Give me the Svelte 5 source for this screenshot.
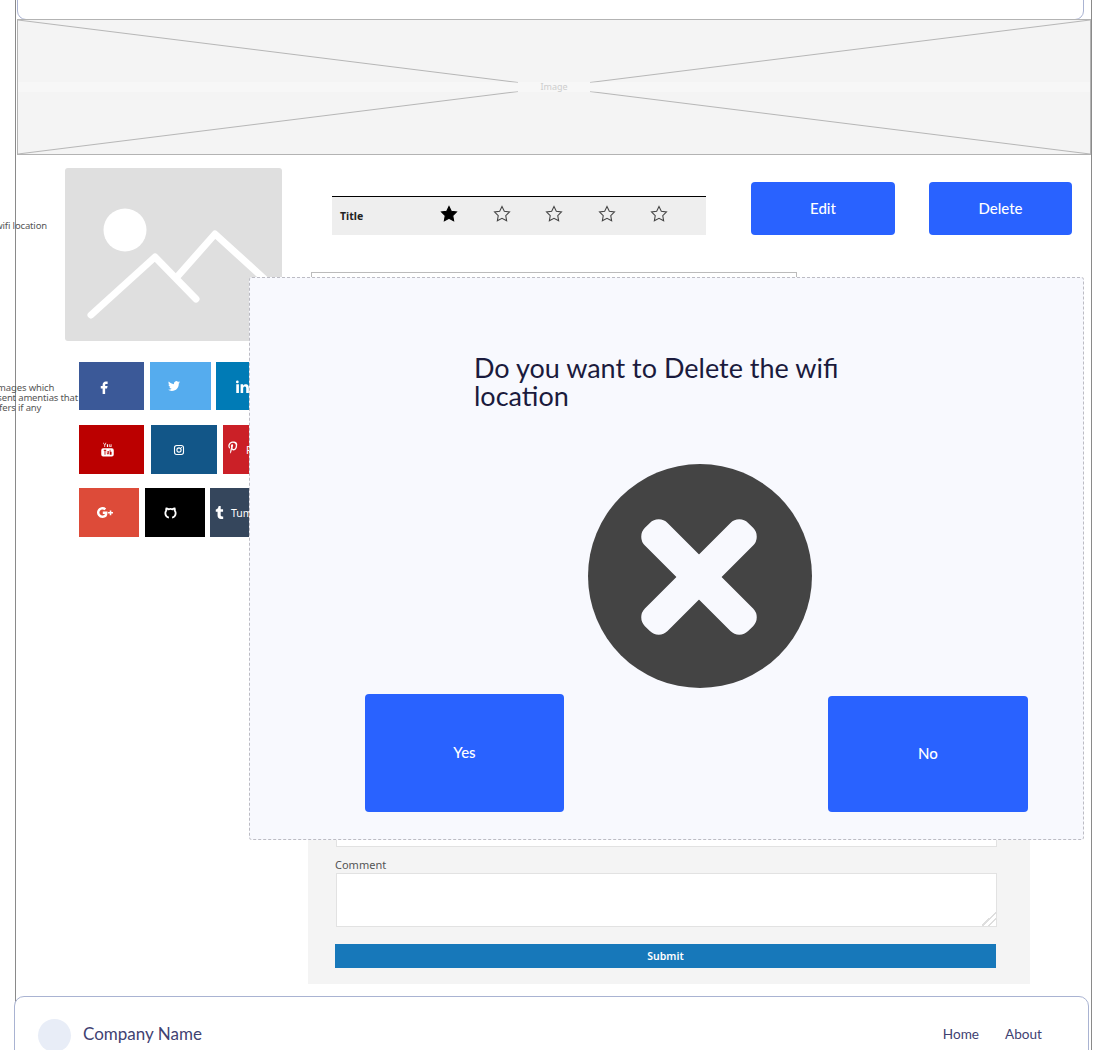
<script>
  const stars = [true, false, false, false, false];
  const socialRows = [
    [
      { key: 'facebook', w: 65 },
      { key: 'twitter', w: 61 },
      { key: 'linkedin', w: 66 }
    ],
    [
      { key: 'youtube', w: 65 },
      { key: 'instagram', w: 66 },
      { key: 'pinterest', w: 100, label: 'Pinterest' }
    ],
    [
      { key: 'gplus', w: 60 },
      { key: 'github', w: 60 },
      { key: 'tumblr', w: 100, label: 'Tumblr' }
    ]
  ];
</script>

<div class="page">
  <div class="frame">
    <div class="header-box"></div>

    <div class="banner">
      <svg class="cross" viewBox="0 0 1074 136" preserveAspectRatio="none" aria-hidden="true">
        <line x1="0" y1="0" x2="1074" y2="136" />
        <line x1="0" y1="136" x2="1074" y2="0" />
      </svg>
      <div class="band"></div>
      <span class="band-label">Image</span>
    </div>

    <div class="main">
      <div class="left">
        <div class="image-row">
          <div class="side-label first">
            <span>wifi location</span>
          </div>
          <div class="thumb">
            <svg viewBox="0 0 217 173" aria-hidden="true">
              <circle cx="60" cy="62" r="21.5" />
              <polyline points="26,147 90,89 131,131" />
              <polyline points="112,109 150,66 205,116" />
            </svg>
          </div>
        </div>

        <div class="social-row">
          <div class="side-label second">
            <span>Select images which</span>
            <span>represent amentias that</span>
            <span>wifi offers if any</span>
          </div>
          <div class="social">
            {#each socialRows as row}
              <div class="s-row">
                {#each row as item}
                  <div class="s-btn {item.key}" style:width="{item.w}px">
                    <svg class="s-icon" viewBox="0 0 24 24" aria-hidden="true">
                      {#if item.key === 'facebook'}
                        <path d="M14 8h3V4h-3c-2.8 0-5 2.2-5 5v2H6v4h3v9h4v-9h3l1-4h-4V9c0-.6.4-1 1-1z" />
                      {:else if item.key === 'twitter'}
                        <path d="M23.95 4.57a10 10 0 01-2.82.77 4.96 4.96 0 002.16-2.72c-.95.55-2 .96-3.12 1.19a4.92 4.92 0 00-8.38 4.48C7.69 8.1 4.07 6.13 1.64 3.16a4.82 4.82 0 00-.67 2.48c0 1.71.87 3.21 2.19 4.1a4.9 4.9 0 01-2.23-.61v.06c0 2.39 1.7 4.38 3.95 4.83a5 5 0 01-2.21.08 4.94 4.94 0 004.6 3.42A9.87 9.87 0 010 19.54a14 14 0 007.56 2.21c9.05 0 14-7.5 14-13.98 0-.21 0-.42-.02-.63a9.94 9.94 0 002.46-2.55z" />
                      {:else if item.key === 'linkedin'}
                        <path d="M4.98 3.5a2.5 2.5 0 11-5 0 2.5 2.5 0 015 0zM.5 8h4.9v16H.5zM8.5 8h4.7v2.2h.07c.65-1.24 2.25-2.54 4.63-2.54 4.95 0 5.87 3.26 5.87 7.5V24h-4.9v-7.9c0-1.88-.03-4.3-2.62-4.3-2.63 0-3.03 2.05-3.03 4.17V24H8.5z" />
                      {:else if item.key === 'youtube'}
                        <path d="M6 1l1.5 3.2L9 1h1.3L8.2 5.2V8H7V5.2L4.8 1zM11 3.4h2V8h-2zM15 3.4h1.2V7h1V3.4h1.2V8H15z" />
                        <path fill-rule="evenodd" d="M5 10h14a3 3 0 013 3v7a3 3 0 01-3 3H5a3 3 0 01-3-3v-7a3 3 0 013-3zm1 2.5v1.5h1.3v6.5h1.4V14H10v-1.5zm5 2v5h3v-5h-1.2v3.8H12v-3.8zm4.5-2v8h3v-5h-1.8v-3z" />
                      {:else if item.key === 'instagram'}
                        <rect class="line" x="3" y="3" width="18" height="18" rx="4.5" />
                        <circle class="line" cx="12" cy="12" r="4.2" />
                        <circle cx="17" cy="7" r="1.2" />
                      {:else if item.key === 'pinterest'}
                        <path d="M12.5 1C7.6 1 4 4.3 4 8.6c0 2.7 1.5 4.3 2.4 4.3.4 0 .6-1.1.6-1.4 0-.4-.9-1.2-.9-2.8 0-3.3 2.5-5.6 5.8-5.6 2.8 0 4.9 1.6 4.9 4.5 0 2.2-.9 6.3-3.7 6.3-1 0-1.9-.7-1.9-1.8 0-1.5 1-3 1-4.6 0-2.7-3.8-2.2-3.8 1 0 .7.1 1.4.4 2-.6 2.4-1.7 6-1.7 8.5 0 .8.1 1.5.2 2.3.2.2.4-.1.6-.3.9-1.2.9-1.5 1.3-3.1.2-.8.7-2.4.9-3.2.5 1 1.7 1.5 2.7 1.5 4.3 0 6.2-4.2 6.2-7.9C20.5 3.4 16.9 1 12.5 1z" />
                      {:else if item.key === 'gplus'}
                        <path class="line thick" d="M13.2 7.6A6 6 0 109.5 18c3.4 0 5-2.4 5-5.6H9.6" />
                        <path class="line" d="M17 12.4h7M20.5 9v7" />
                      {:else if item.key === 'github'}
                        <path class="line thick" d="M9 21.5C5 20.5 2.5 17 2.5 13c0-1.8.6-3.4 1.7-4.6-.3-1-.3-2.4.2-3.9 1.5 0 2.8.8 3.8 1.6a11 11 0 017.6 0c1-.8 2.3-1.6 3.8-1.6.5 1.5.5 2.9.2 3.9 1.1 1.2 1.7 2.8 1.7 4.6 0 4-2.5 7.5-6.5 8.5" />
                      {:else if item.key === 'tumblr'}
                        <path d="M14.6 24c-3.6 0-6.2-1.9-6.2-6.3v-7.2H5.1V6.6C8.7 5.7 10.2 2.6 10.4 0h3.8v6.2h4.4v4.3h-4.4v6.3c0 1.9 1 2.5 2.5 2.5h2.1V24z" />
                      {/if}
                    </svg>
                    {#if item.label}<span class="s-label">{item.label}</span>{/if}
                  </div>
                {/each}
              </div>
            {/each}
          </div>
        </div>
      </div>

      <div class="right">
        <div class="head-row">
          <div class="title-bar">
            <span class="title-text">Title</span>
            <div class="stars">
              {#each stars as filled}
                <svg class="star" class:filled viewBox="0 0 24 24" aria-hidden="true">
                  <path d="M12 2l3.1 6.3 6.9 1-5 4.9 1.2 6.9L12 17.8l-6.2 3.3L7 14.2 2 9.3l6.9-1z" />
                </svg>
              {/each}
            </div>
          </div>
          <button class="primary edit">Edit</button>
          <button class="primary delete">Delete</button>
        </div>

        <div class="table-box"></div>

        <div class="form-panel">
          <label class="f-label" for="email">Email</label>
          <input id="email" class="f-input" type="text" />
          <label class="f-label comment" for="comment">Comment</label>
          <textarea id="comment" class="f-area"></textarea>
          <div class="submit">Submit</div>
        </div>
      </div>
    </div>

    <div class="footer">
      <div class="brand">
        <div class="logo"></div>
        <span class="company">Company Name</span>
      </div>
      <nav class="links">
        <span>Home</span>
        <span>About</span>
      </nav>
    </div>
  </div>

  <div class="modal">
    <h2 class="m-title">Do you want to Delete the wifi location</h2>
    <svg class="m-icon" viewBox="0 0 224 224" aria-hidden="true">
      <circle cx="112" cy="112" r="112" />
      <g transform="rotate(45 111 113)">
        <rect class="x" x="38" y="97" width="146" height="32" rx="12.5" />
        <rect class="x" x="95" y="40" width="32" height="146" rx="12.5" />
      </g>
    </svg>
    <div class="m-actions">
      <button class="primary yes">Yes</button>
      <button class="primary no">No</button>
    </div>
  </div>
</div>

<style>
  :global(body) {
    margin: 0;
    background: #fff;
  }

  .page {
    position: relative;
    width: 1117px;
    height: 1050px;
    overflow: hidden;
    font-family: "Noto Sans", "Open Sans", sans-serif;
  }

  .frame {
    box-sizing: border-box;
    margin-left: 15px;
    width: 1077px;
    min-height: 1050px;
    border-left: 1px solid #8a8a8a;
    border-right: 1px solid #8a8a8a;
  }

  .header-box {
    box-sizing: border-box;
    margin: -20px 0 0 1px;
    width: 1067px;
    height: 40px;
    border: 1px solid #aab3d2;
    border-radius: 9px;
  }

  .banner {
    position: relative;
    box-sizing: border-box;
    margin: -1px 0 0 1px;
    width: 1074px;
    height: 136px;
    background: #f4f4f4;
    border: 1px solid #b3b3b3;
  }

  .cross {
    display: block;
    width: 100%;
    height: 100%;
  }

  .cross line {
    stroke: #b5b5b5;
    stroke-width: 1;
  }

  .band {
    position: absolute;
    left: 0;
    right: 0;
    top: 62px;
    height: 10px;
    background: rgba(255, 255, 255, 0.3);
  }

  .band-label {
    position: absolute;
    left: 500px;
    width: 72px;
    top: 62px;
    height: 10px;
    line-height: 10px;
    text-align: center;
    font-size: 9px;
    color: #cdcdcd;
    background: #f7f7f7;
  }

  .main {
    display: flex;
  }

  .left {
    flex: none;
    width: 308px;
    margin-left: -16px;
    box-sizing: border-box;
  }

  .image-row {
    display: flex;
    margin-top: 13px;
  }

  .side-label {
    flex: none;
    display: flex;
    flex-direction: column;
    align-items: flex-end;
    white-space: nowrap;
    font-size: 9.5px;
    letter-spacing: -0.15px;
    line-height: 10px;
    color: #555;
  }

  .side-label.first {
    width: 47px;
    margin-right: 18px;
    padding-top: 53px;
  }

  .side-label.second {
    width: 79px;
    padding-top: 21px;
    align-items: flex-start;
    transform: translateX(-1px);
  }

  .side-label.second span:nth-child(1) {
    margin-left: -32px;
  }

  .side-label.second span:nth-child(2) {
    margin-left: -25px;
  }

  .side-label.second span:nth-child(3) {
    margin-left: -26px;
  }

  .thumb {
    flex: none;
    width: 217px;
    height: 173px;
    background: #dfdfdf;
    border-radius: 3px;
  }

  .thumb svg {
    display: block;
    width: 100%;
    height: 100%;
  }

  .thumb circle {
    fill: #fff;
  }

  .thumb polyline {
    fill: none;
    stroke: #fff;
    stroke-width: 7;
    stroke-linecap: round;
    stroke-linejoin: round;
  }

  .social-row {
    display: flex;
    margin-top: 21px;
  }

  .social {
    display: flex;
    flex-direction: column;
    gap: 15px;
  }

  .s-row {
    display: flex;
    gap: 6px;
    height: 48px;
  }

  .s-row:nth-child(2),
  .s-row:nth-child(3) {
    height: 49px;
  }

  .s-row:nth-child(3) {
    margin-top: -1px;
  }

  .s-btn {
    box-sizing: border-box;
    flex: none;
    display: flex;
    align-items: center;
    justify-content: center;
    color: #fff;
    font-size: 10px;
  }

  .s-icon {
    width: 12px;
    height: 12px;
    fill: #fff;
    flex: none;
  }

  .s-icon .line {
    fill: none;
    stroke: #fff;
    stroke-width: 2.2;
  }

  .s-icon .thick {
    stroke-width: 3.4;
  }

  .s-label {
    margin-left: 5px;
    font-size: 10.5px;
  }

  .facebook { background: #3b5998; padding-right: 15px; }
  .facebook .s-icon { width: 15px; height: 15px; }
  .twitter { background: #55acee; padding-right: 13px; }
  .linkedin { background: #007bb6; justify-content: flex-start; padding-left: 20px; margin-left: -1px; }
  .linkedin .s-icon { width: 13px; height: 13px; }
  .youtube { background: #bb0000; padding-right: 9px; }
  .youtube .s-icon { width: 15px; height: 15px; }
  .instagram { background: #125688; padding-right: 10px; margin-left: 1px; }
  .pinterest { background: #cb2027; justify-content: flex-start; padding-left: 3px; }
  .pinterest .s-icon { width: 14px; height: 14px; margin-top: -3px; }
  .pinterest .s-label { margin-left: 6px; }
  .gplus { background: #dd4b39; padding-right: 9px; }
  .gplus .s-icon { width: 17px; height: 17px; }
  .github { background: #000; padding-right: 10px; }
  .github .s-icon { width: 13px; height: 13px; }
  .tumblr { background: #35465c; justify-content: flex-start; padding-left: 3px; margin-left: -1px; }
  .tumblr .s-icon { width: 13px; height: 13px; }

  .right {
    flex: none;
    width: 783px;
    box-sizing: border-box;
  }

  .head-row {
    display: flex;
    align-items: flex-end;
    padding-top: 27px;
  }

  .title-bar {
    box-sizing: border-box;
    display: flex;
    align-items: center;
    width: 374px;
    height: 39px;
    margin-left: 24px;
    padding-left: 8px;
    background: #eee;
    border-top: 1px solid #000;
  }

  .title-text {
    width: 100px;
    font-size: 10.5px;
    font-weight: 700;
    color: #222;
  }

  .stars {
    display: flex;
    gap: 34.5px;
    margin-top: -5px;
  }

  .star {
    width: 18px;
    height: 18px;
    fill: none;
    stroke: #444;
    stroke-width: 1.4;
  }

  .star.filled {
    fill: #000;
    stroke: #000;
  }

  .primary {
    border: 0;
    padding: 0 0 2px;
    background: #2962ff;
    color: #fff;
    font-family: "Lato", sans-serif;
    font-size: 15px;
    font-weight: 500;
    border-radius: 4px;
  }

  .edit {
    width: 144px;
    height: 53px;
    margin-left: 45px;
  }

  .delete {
    width: 143px;
    height: 53px;
    margin-left: 34px;
  }

  .table-box {
    box-sizing: border-box;
    margin: 37px 0 0 3px;
    width: 486px;
    height: 480px;
    border: 1px solid #bbb;
  }

  .form-panel {
    box-sizing: border-box;
    margin-top: 18px;
    width: 722px;
    padding: 16px 34px 16px 27px;
    background: #f4f4f4;
    display: flex;
    flex-direction: column;
  }

  .f-label {
    height: 14px;
    line-height: 14px;
    font-size: 11px;
    color: #555;
  }

  .f-label.comment {
    margin-top: 11px;
    height: 15px;
  }

  .f-input,
  .f-area {
    box-sizing: border-box;
    display: block;
    margin: 0 0 0 1px;
    width: 661px;
    background: #fff;
    border: 1px solid #e2e2e2;
    padding: 0;
  }

  .f-input {
    height: 47px;
  }

  .f-area {
    height: 54px;
  }

  .f-area::-webkit-resizer {
    background: linear-gradient(135deg, transparent 50%, #dedede 50%, #dedede 58%, transparent 58%, transparent 72%, #dedede 72%, #dedede 80%, transparent 80%);
  }

  .submit {
    margin-top: 17px;
    width: 661px;
    height: 24px;
    line-height: 24px;
    text-align: center;
    background: #1778ba;
    color: #fff;
    font-size: 10.5px;
    font-weight: 600;
  }

  .footer {
    position: relative;
    box-sizing: border-box;
    display: flex;
    justify-content: space-between;
    margin: 12px 0 0 -2px;
    width: 1075px;
    height: 80px;
    padding: 22px 46px 0 23px;
    background: #fff;
    border: 1px solid #a9b3d2;
    border-radius: 10px;
    font-family: "Lato", "Noto Sans", sans-serif;
    color: #3f4272;
  }

  .brand {
    display: flex;
    align-items: flex-start;
    gap: 12px;
  }

  .logo {
    width: 33px;
    height: 33px;
    border-radius: 50%;
    background: #e8edf7;
  }

  .company {
    margin-top: 4px;
    font-size: 17px;
    line-height: 22px;
  }

  .links {
    display: flex;
    gap: 26px;
    margin-top: 7px;
    font-size: 13.6px;
    line-height: 16px;
  }

  .modal {
    position: absolute;
    left: 249px;
    top: 277px;
    box-sizing: border-box;
    width: 835px;
    height: 563px;
    padding-top: 76px;
    background: #f8f9fe;
    border: 1px dashed #bcbcc4;
    border-radius: 3px;
  }

  .m-title {
    margin: 0 0 0 224px;
    width: 400px;
    font-family: "Lato", sans-serif;
    font-size: 27px;
    font-weight: 400;
    line-height: 28px;
    color: #1b1b3d;
  }

  .m-icon {
    display: block;
    width: 224px;
    height: 224px;
    margin: 54px 0 0 338px;
  }

  .m-icon circle {
    fill: #444;
  }

  .m-icon .x {
    fill: #f8f9fe;
  }

  .m-actions {
    display: flex;
    align-items: flex-end;
    justify-content: space-between;
    margin-top: 6px;
    padding: 0 55px 0 115px;
  }

  .yes {
    width: 199px;
    height: 118px;
  }

  .no {
    width: 200px;
    height: 116px;
  }
</style>
